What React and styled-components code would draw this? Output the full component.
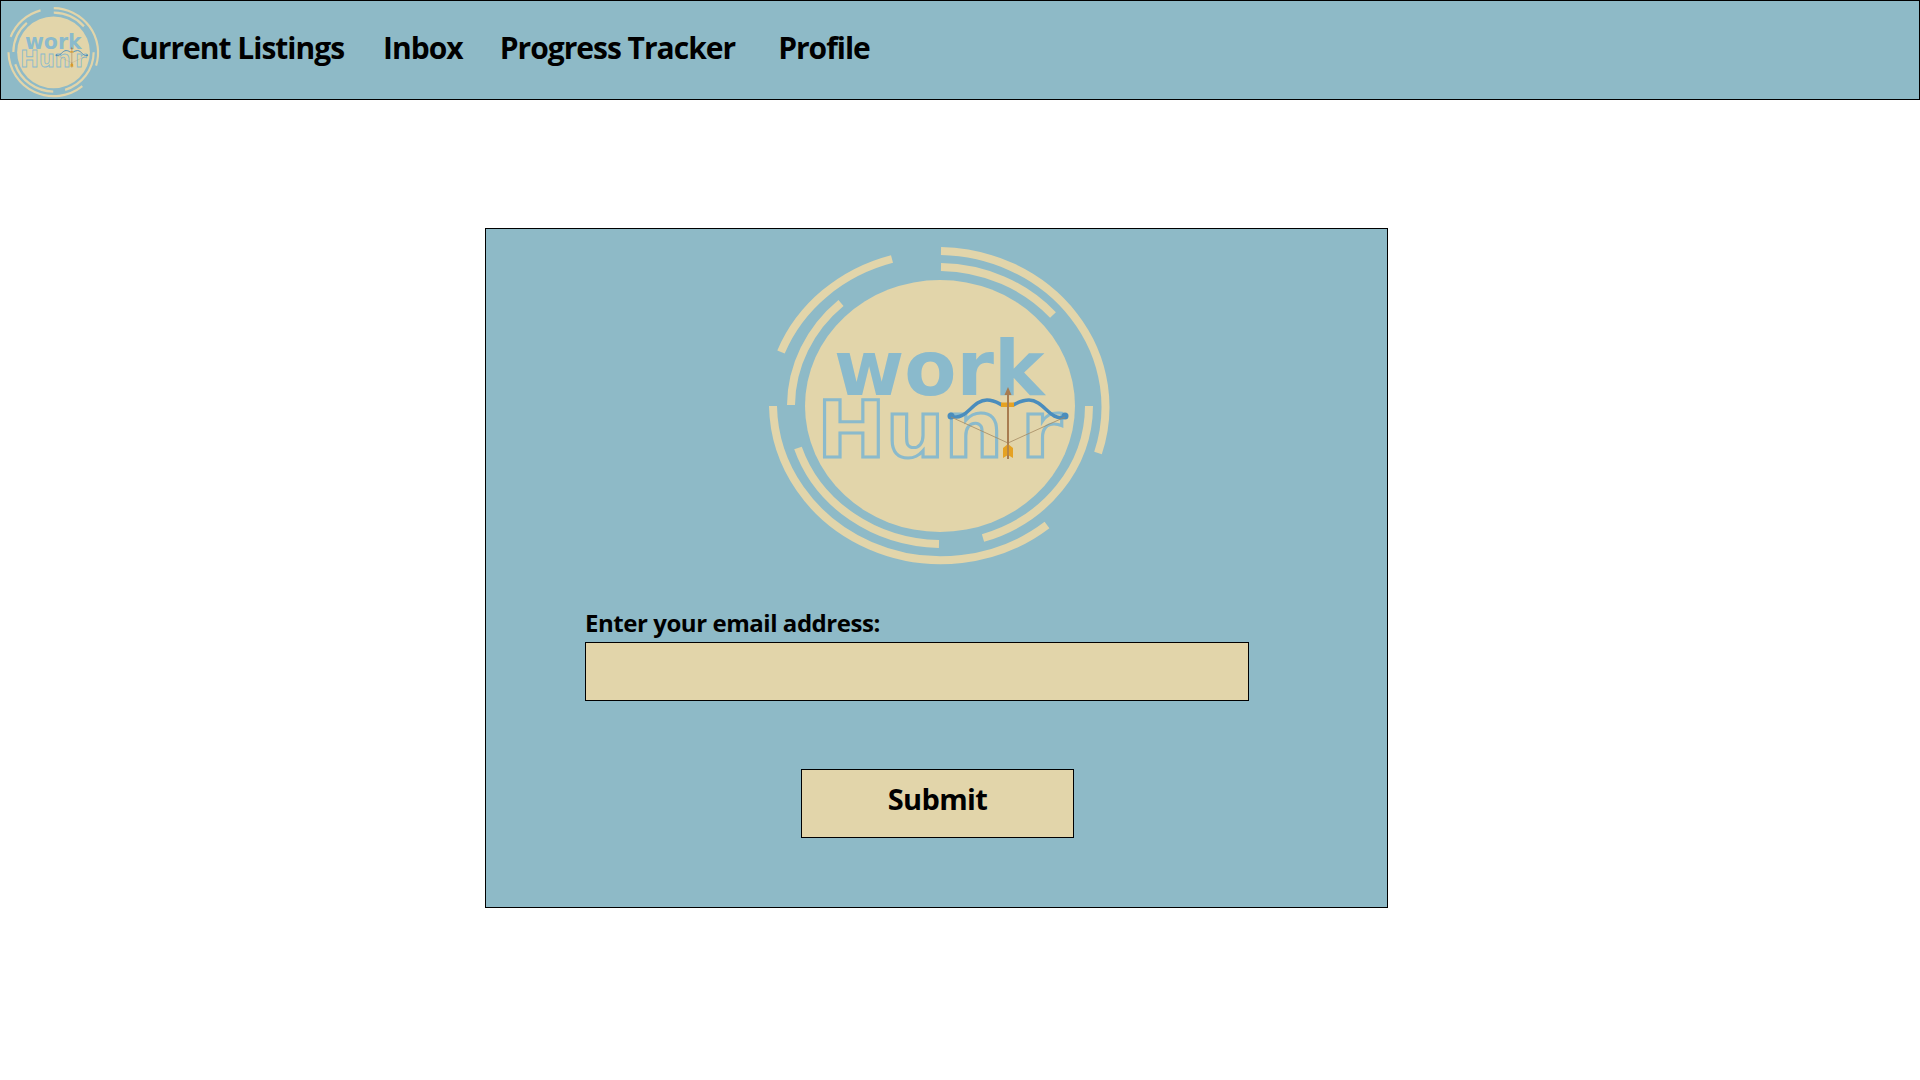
import styled, { createGlobalStyle } from 'styled-components'

const BLUE = '#8EBAC7'
const SAND = '#E2D5AA'
const LOGO_BLUE = '#8ABACC'

const GlobalStyle = createGlobalStyle`
  html, body {
    margin: 0;
    padding: 0;
    background: #fff;
  }
  * {
    box-sizing: border-box;
  }
  body {
    font-family: "Open Sans", "Noto Sans", sans-serif;
    color: #000;
  }
`;

const Header = styled.header`
  display: flex;
  align-items: flex-start;
  height: 100px;
  padding: 4px 0 0 4px;
  background-color: ${BLUE};
  border: 1px solid #000;
`;
const NavLinks = styled.nav`
  display: flex;
  margin-left: 19px;
  height: 85px;
  align-items: center;
`;
const NavLink = styled.a`
  font-size: 30px;
  font-weight: 700;
  letter-spacing: -1px;
  color: #000;
  text-decoration: none;
  margin-right: ${props => props.$gap}px;
`;
const Card = styled.main`
  width: 903px;
  height: 680px;
  margin: 128px 0 0 485px;
  padding-top: 11px;
  background-color: ${BLUE};
  border: 1px solid #000;
`;
const HeaderLogo = styled(LogoMark)`
  display: block;
  flex: none;
  width: 97px;
  height: 94px;
`;
const CardLogo = styled(LogoMark)`
  display: block;
  width: 360px;
  height: 330px;
  margin-left: 274px;
`;
const Form = styled.form`
  display: flex;
  flex-direction: column;
  align-items: flex-start;
  padding: 40px 0 0 99px;
`;
const Label = styled.label`
  font-size: 24px;
  font-weight: 700;
  letter-spacing: -0.45px;
  line-height: 26px;
  height: 32px;
`;
const EmailInput = styled.input`
  width: 664px;
  height: 59px;
  background-color: ${SAND};
  border: 1px solid #000;
  border-radius: 0;
  outline: none;
`;
const SubmitButton = styled.button`
  width: 273px;
  height: 69px;
  margin: 68px 0 0 216px;
  padding-bottom: 12px;
  font-family: inherit;
  font-size: 29px;
  font-weight: 700;
  letter-spacing: -0.6px;
  color: #000;
  background-color: ${SAND};
  border: 1px solid #000;
  border-radius: 0;
`;

const RingArc = styled.path`
  fill: none;
  stroke: ${SAND};
  stroke-width: 8;
`;
const LogoWord = styled.text`
  font-family: "DejaVu Sans", sans-serif;
  font-size: 76px;
  font-weight: 700;
  fill: ${LOGO_BLUE};
`;
const LogoOutline = styled(LogoWord)`
  font-size: 78px;
  fill: none;
  stroke: ${LOGO_BLUE};
  stroke-width: 3;
`;

const arcs = [
  'M201 21 A168 156 0 0 1 358 223',
  'M201 37 A152 139 0 0 1 313 85',
  'M41 122 A168 156 0 0 1 152 29',
  'M51 175 A152 139 0 0 1 101 73',
  'M307 295 A168 157 0 0 1 33 176',
  'M199 314 A152 139 0 0 1 58 218',
  'M349 176 A152 139 0 0 1 243 308',
]

function LogoMark({ className }) {
  return (
    <svg className={className} viewBox="20 10 360 330" preserveAspectRatio="none">
      {arcs.map(d => <RingArc key={d} d={d} />)}
      <ellipse cx="200" cy="176" rx="135" ry="126" fill={SAND} />
      <LogoWord x="94" y="165">work</LogoWord>
      <LogoOutline x="77" y="227" textLength="186" lengthAdjust="spacingAndGlyphs">Hun</LogoOutline>
      <LogoOutline x="281" y="227" textLength="41" lengthAdjust="spacingAndGlyphs">r</LogoOutline>
      {/* bow and arrow */}
      <path d="M211 186 C226 192 232 170 247 170 C254 170 258 173 262 175 M273 175 C277 173 282 170 289 170 C304 170 310 192 325 187" fill="none" stroke="#4A8DBD" strokeWidth="3.500" />
      <circle cx="211" cy="186" r="3.500" fill="#4A8DBD" />
      <circle cx="325" cy="186" r="3.500" fill="#4A8DBD" />
      <path d="M211 187 L268 213 L325 187" fill="none" stroke="#A58A62" strokeWidth="0.8" />
      <rect x="261" y="172.500" width="13" height="4.500" fill="#E5A223" />
      <path d="M268 162 V229" stroke="#A87C50" strokeWidth="2" />
      <path d="M268 157 L271.500 165 H264.500 Z" fill="#A87C50" />
      <path d="M263 218 L268 214 L273 218 L273 228 L268 225 L263 228 Z" fill="#E5A223" />
      <path d="M268 212 V229" stroke="#A87C50" strokeWidth="1.500" />
    </svg>
  )
}

export default function App() {
  return (
    <>
      <GlobalStyle />
      <Header>
        <HeaderLogo />
        <NavLinks>
          <NavLink href="#" $gap={39}>Current Listings</NavLink>
          <NavLink href="#" $gap={37}>Inbox</NavLink>
          <NavLink href="#" $gap={43}>Progress Tracker</NavLink>
          <NavLink href="#" $gap={0}>Profile</NavLink>
        </NavLinks>
      </Header>
      <Card>
        <CardLogo />
        <Form onSubmit={e => e.preventDefault()}>
          <Label htmlFor="email">Enter your email address:</Label>
          <EmailInput id="email" type="email" />
          <SubmitButton type="submit">Submit</SubmitButton>
        </Form>
      </Card>
    </>
  )
}
